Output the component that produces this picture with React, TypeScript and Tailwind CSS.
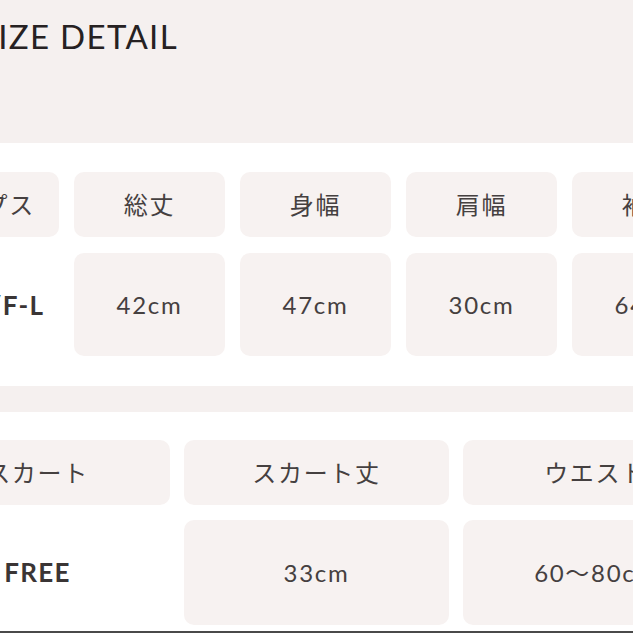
import React from "react";

const FONT = { fontFamily: "Lato, 'Noto Sans CJK JP', sans-serif" };

function Cell({ children, tall = false, bg = true, bold = false, w }: { children: React.ReactNode; tall?: boolean; bg?: boolean; bold?: boolean; w: string }) {
  return (
    <div
      className={`${w} shrink-0 flex items-center justify-center rounded-[10px] leading-none whitespace-nowrap ${
        tall ? "h-[103px]" : "h-[65px]"
      } ${bg ? "bg-[#f7f2f1]" : ""} ${bold ? "font-bold text-[26px] tracking-[0.05em] text-[#3a3535]" : "text-[24px] tracking-[0.07em] text-[#454040]"}`}
    >
      {children}
    </div>
  );
}

export default function App() {
  const tops = ["総丈", "身幅", "肩幅", "袖丈"];
  const topsVals = ["42cm", "47cm", "30cm", "64cm"];
  return (
    <div className="w-[633px] h-[633px] overflow-hidden bg-white flex flex-col" style={FONT}>
      <div className="h-[143px] shrink-0 bg-[#f5f0ef]">
        <h1 className="ml-[-21px] pt-[20px] text-[33px] leading-none font-normal tracking-[0.04em] text-[#262122] whitespace-nowrap">
          SIZE DETAIL
        </h1>
      </div>

      <div className="pt-[29px] ml-[-92px] flex flex-col gap-[16px]">
        <div className="flex gap-[15px]">
          <Cell w="w-[151px]">トップス</Cell>
          {tops.map((t) => (
            <Cell key={t} w="w-[151px]">
              {t}
            </Cell>
          ))}
        </div>
        <div className="flex gap-[15px]">
          <Cell w="w-[151px]" tall bg={false} bold>
            FREE/F-L
          </Cell>
          {topsVals.map((t) => (
            <Cell key={t} w="w-[151px]" tall>
              {t}
            </Cell>
          ))}
        </div>
      </div>

      <div className="mt-[30px] h-[26px] shrink-0 bg-[#f5f0ef]" />

      <div className="pt-[28px] ml-[-95px] flex flex-col gap-[15px]">
        <div className="flex gap-[14px]">
          <Cell w="w-[265px]">スカート</Cell>
          <Cell w="w-[265px]">スカート丈</Cell>
          <Cell w="w-[265px]">ウエスト</Cell>
        </div>
        <div className="flex gap-[14px]">
          <Cell w="w-[265px]" tall bg={false} bold>
            FREE
          </Cell>
          <div className="w-[265px] h-[105px] shrink-0 flex items-center justify-center rounded-[10px] bg-[#f7f2f1] text-[24px] leading-none tracking-[0.07em] text-[#454040]">
            33cm
          </div>
          <div className="w-[265px] h-[105px] shrink-0 flex items-center justify-center rounded-[10px] bg-[#f7f2f1] text-[24px] leading-none tracking-[0.07em] text-[#454040] whitespace-nowrap">
            60〜80cm
          </div>
        </div>
      </div>

      <div className="mt-[6px] h-[2px] shrink-0 bg-[#4a4a4a]" />
    </div>
  );
}
